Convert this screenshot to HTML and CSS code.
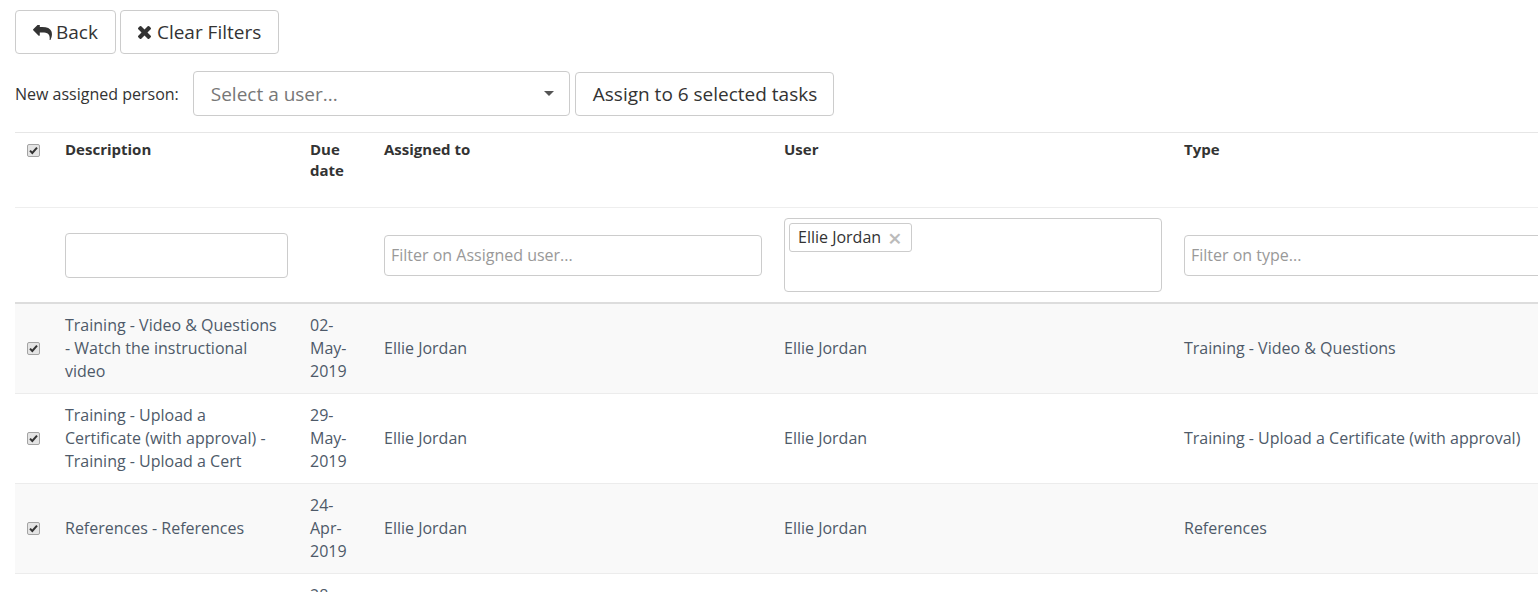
FILE: index.html
```html
<!DOCTYPE html>
<html>
<head>
<meta charset="utf-8">
<link rel="stylesheet" href="styles.css">
</head>
<body>
<div class="page">
  <div class="toolbar">
    <button class="btn btn-lg"><svg class="ico-reply" viewBox="0 190 1792 1420"><path fill="currentColor" d="M1792 1120q0 166-127 451-3 7-10.5 24t-13.5 30-13 22q-12 17-28 17-15 0-23.5-10t-8.5-25q0-9 2.5-26.5t2.5-23.5q5-68 5-123 0-101-17.5-181t-48.5-138.5-80-101-105.5-69.5-133-42.5-154-21.5-175.5-6h-224v256q0 26-19 45t-45 19-45-19l-512-512q-19-19-19-45t19-45l512-512q19-19 45-19t45 19 19 45v256h224q713 0 875 403 53 134 53 333z"/></svg>Back</button>
    <button class="btn btn-lg"><svg class="ico-times" viewBox="110 366 1188 1188"><path fill="currentColor" d="M1298 1322q0 40-28 68l-136 136q-28 28-68 28t-68-28l-294-294-294 294q-28 28-68 28t-68-28l-136-136q-28-28-28-68t28-68l294-294-294-294q-28-28-28-68t28-68l136-136q28-28 68-28t68 28l294 294 294-294q28-28 68-28t68 28l136 136q28 28 28 68t-28 68l-294 294 294 294q28 28 28 68z"/></svg>Clear Filters</button>
  </div>
  <div class="assign-row">
    <label class="assign-label">New assigned person:</label>
    <div class="select">
      <span class="select-placeholder">Select a user...</span>
      <span class="select-caret"></span>
    </div>
    <button class="btn btn-lg btn-assign">Assign to 6 selected tasks</button>
  </div>
  <div class="table-wrap">
    <table class="tasks">
      <colgroup>
        <col class="c-check"><col class="c-desc"><col class="c-due"><col class="c-assigned"><col class="c-user"><col class="c-type">
      </colgroup>
      <thead>
        <tr class="head-row">
          <th><input class="chk" type="checkbox" checked></th>
          <th>Description</th>
          <th>Due date</th>
          <th>Assigned to</th>
          <th>User</th>
          <th>Type</th>
        </tr>
        <tr class="filter-row">
          <th></th>
          <th><input class="form-control tall" type="text"></th>
          <th></th>
          <th><input class="form-control" type="text" placeholder="Filter on Assigned user..."></th>
          <th>
            <div class="multi">
              <span class="tag">Ellie Jordan<span class="tag-x">×</span></span>
            </div>
          </th>
          <th><input class="form-control wide" type="text" placeholder="Filter on type..."></th>
        </tr>
      </thead>
      <tbody>
        <tr>
          <td><input class="chk" type="checkbox" checked></td>
          <td class="desc">Training - Video &amp; Questions - Watch the instructional video</td>
          <td><span class="due">02-May-2019</span></td>
          <td>Ellie Jordan</td>
          <td>Ellie Jordan</td>
          <td>Training - Video &amp; Questions</td>
        </tr>
        <tr>
          <td><input class="chk" type="checkbox" checked></td>
          <td class="desc">Training - Upload a Certificate (with approval) - Training - Upload a Cert</td>
          <td><span class="due">29-May-2019</span></td>
          <td>Ellie Jordan</td>
          <td>Ellie Jordan</td>
          <td>Training - Upload a Certificate (with approval)</td>
        </tr>
        <tr>
          <td><input class="chk" type="checkbox" checked></td>
          <td class="desc">References - References</td>
          <td><span class="due">24-Apr-2019</span></td>
          <td>Ellie Jordan</td>
          <td>Ellie Jordan</td>
          <td>References</td>
        </tr>
        <tr>
          <td><input class="chk" type="checkbox" checked></td>
          <td class="desc">Policies - Read and accept</td>
          <td><span class="due">28-Apr-2019</span></td>
          <td>Ellie Jordan</td>
          <td>Ellie Jordan</td>
          <td>Policies</td>
        </tr>
      </tbody>
    </table>
  </div>
</div>
</body>
</html>
```
FILE: styles.css
```css
html, body {
  margin: 0;
  padding: 0;
  overflow: hidden;
  background: #fff;
}
body {
  font-family: "Open Sans", "DejaVu Sans", sans-serif;
  font-size: 16px;
  color: #333;
}
.page {
  padding: 10px 0 0 15px;
}
.toolbar {
  display: flex;
  gap: 4px;
}
.btn {
  font-family: inherit;
  display: inline-flex;
  align-items: center;
  background: #fff;
  border: 1px solid #ccc;
  border-radius: 4px;
  color: #333;
  cursor: pointer;
}
.btn-lg {
  font-size: 19px;
  line-height: 24px;
  padding: 9px 17px;
}
.btn-assign {
  padding: 9px 16px 9px 17px;
}
.ico-reply {
  width: 19px;
  height: 15px;
  margin-right: 4px;
}
.ico-times {
  width: 13px;
  height: 13px;
  margin-right: 6px;
}
.assign-row {
  display: flex;
  align-items: center;
  margin-top: 17px;
  gap: 5px;
}
.assign-label {
  font-size: 16px;
  margin-right: 9px;
}
.select {
  height: 43px;
  border: 1px solid #ccc;
  border-radius: 4px;
  display: flex;
  align-items: center;
  justify-content: space-between;
  padding: 0 15px 0 17px;
  box-sizing: content-box;
  width: 343px;
}
.select-placeholder {
  font-size: 19px;
  color: #777;
}
.select-caret {
  width: 0;
  height: 0;
  border-top: 5px solid #555;
  border-left: 5px solid transparent;
  border-right: 5px solid transparent;
}
.table-wrap {
  margin-top: 16px;
}
.tasks {
  border-collapse: collapse;
  table-layout: fixed;
  width: 1561px;
}
.c-check { width: 42px; }
.c-desc { width: 245px; }
.c-due { width: 74px; }
.c-assigned { width: 400px; }
.c-user { width: 400px; }
.c-type { width: 400px; }
.tasks th {
  text-align: left;
  font-weight: 700;
  color: #333;
}
.head-row th {
  border-top: 1px solid #e6e6e6;
  border-bottom: 1px solid #eee;
  vertical-align: top;
  line-height: 21px;
  padding: 6px 8px 26px;
  font-size: 15px;
}
.filter-row th {
  border-bottom: 2px solid #ddd;
  padding: 10px 8px;
  vertical-align: middle;
}
.chk {
  appearance: none;
  -webkit-appearance: none;
  display: block;
  box-sizing: border-box;
  width: 13px;
  height: 13px;
  margin: 0 0 0 4px;
  border: 1px solid #a3a3a3;
  border-radius: 2px;
  background-color: #e4e4e4;
  background-image: url("data:image/svg+xml,%3Csvg xmlns='http://www.w3.org/2000/svg' viewBox='0 0 11 11'%3E%3Cpath d='M2 5.6 L4.3 8 L9 2.6' fill='none' stroke='%23333' stroke-width='2'/%3E%3C/svg%3E");
  background-size: 11px 11px;
  background-repeat: no-repeat;
  background-position: center;
}
.head-row .chk {
  margin-top: 5px;
}
.form-control {
  box-sizing: border-box;
  width: 378px;
  height: 41px;
  border: 1px solid #ccc;
  border-radius: 4px;
  padding: 6px 6px;
  font-family: inherit;
  font-size: 16px;
  color: #555;
  display: block;
}
.form-control::placeholder {
  color: #999;
}
.form-control.tall {
  height: 45px;
  width: 223px;
}
.form-control.wide {
  width: 384px;
}
.multi {
  box-sizing: border-box;
  width: 378px;
  height: 74px;
  border: 1px solid #ccc;
  border-radius: 4px;
  padding: 4px;
}
.tag {
  box-sizing: border-box;
  display: inline-flex;
  align-items: center;
  height: 29px;
  border: 1px solid #ccc;
  border-radius: 3px;
  padding: 0 9px 0 8px;
  font-size: 16px;
  font-weight: 400;
  line-height: 23px;
  color: #333;
}
.tag-x {
  color: #bbb;
  font-weight: 600;
  font-size: 24px;
  line-height: 23px;
  margin-left: 7px;
}
.tasks td {
  font-size: 16px;
  line-height: 23px;
  padding: 10px 8px;
  color: #4e5a69;
  vertical-align: middle;
  border-bottom: 1px solid #ececec;
}
.tasks td.desc {
  padding-right: 19px;
}
.due {
  display: block;
  width: 46px;
}
.tasks tbody tr:nth-child(odd) td {
  background: #f9f9f9;
}
```
